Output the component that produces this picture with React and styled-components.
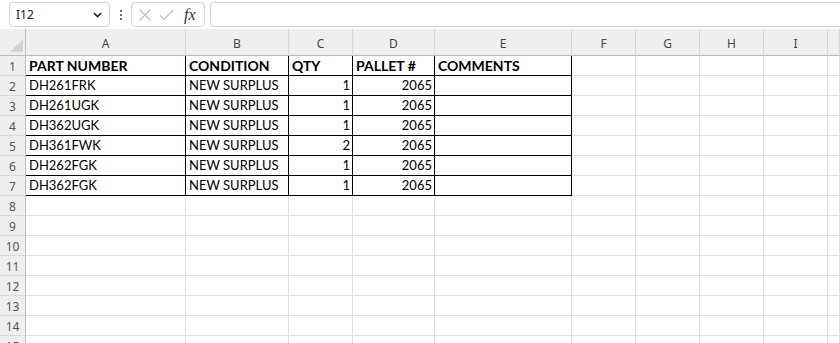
import React from "react";
import styled, { createGlobalStyle } from "styled-components";

const GlobalStyle = createGlobalStyle`
  html, body {
    margin: 0;
    padding: 0;
    background: #ffffff;
    overflow: hidden;
  }
`;

const COLS = [26, 160, 103, 64, 82, 137, 64, 64, 64, 64];
const LETTERS = ["A", "B", "C", "D", "E", "F", "G", "H", "I", ""];

const ROWS = [
  { cells: ["PART NUMBER", "CONDITION", "QTY", "PALLET #", "COMMENTS"], head: true },
  { cells: ["DH261FRK", "NEW SURPLUS", "1", "2065", ""] },
  { cells: ["DH261UGK", "NEW SURPLUS", "1", "2065", ""] },
  { cells: ["DH362UGK", "NEW SURPLUS", "1", "2065", ""] },
  { cells: ["DH361FWK", "NEW SURPLUS", "2", "2065", ""] },
  { cells: ["DH262FGK", "NEW SURPLUS", "1", "2065", ""] },
  { cells: ["DH362FGK", "NEW SURPLUS", "1", "2065", ""] },
];

const TOTAL_ROWS = 15;

const Page = styled.div`
  width: 840px;
  height: 343px;
  overflow: hidden;
  background: #ffffff;
`;

const Toolbar = styled.div`
  display: flex;
  align-items: center;
  height: 29px;
  padding: 0 0 0 9px;
  box-sizing: border-box;
  background: #ffffff;
`;

const NameBox = styled.div`
  display: flex;
  align-items: center;
  justify-content: space-between;
  width: 101px;
  height: 25px;
  box-sizing: border-box;
  border: 1px solid #d4d4d4;
  border-radius: 4px;
  padding: 0 7px 0 6px;
  font-family: "Noto Sans", "Open Sans", sans-serif;
  font-size: 12px;
  color: #222;
`;

const Kebab = styled.div`
  display: flex;
  flex-direction: column;
  justify-content: center;
  gap: 2px;
  width: 21px;
  align-items: center;

  & > span {
    width: 2px;
    height: 2px;
    background: #3a3a3a;
    border-radius: 1px;
  }
`;

const FxGroup = styled.div`
  display: flex;
  align-items: center;
  width: 74px;
  height: 25px;
  box-sizing: border-box;
  border: 1px solid #d4d4d4;
  border-radius: 4px;
  padding: 0 0 0 6px;
  gap: 7px;
`;

const Fx = styled.span`
  font-family: "Liberation Serif", "DejaVu Serif", serif;
  font-style: italic;
  font-size: 16px;
  color: #333;
  margin-left: 3px;
  line-height: 1;
`;

const FormulaInput = styled.div`
  flex: 1;
  height: 25px;
  margin-left: 5px;
  box-sizing: border-box;
  border: 1px solid #d4d4d4;
  border-right: none;
  border-radius: 4px 0 0 4px;
`;

const Grid = styled.div`
  display: grid;
  grid-template-columns: ${COLS.map((w) => w + "px").join(" ")} 1fr;
  grid-auto-rows: 20px;
  grid-template-rows: 27px;
`;

const Corner = styled.div`
  position: relative;
  background: #efefef;
  border-right: 1px solid #bdbdbd;
  border-bottom: 1px solid #bdbdbd;
  box-sizing: border-box;
  overflow: hidden;

  &::after {
    content: "";
    position: absolute;
    right: 2px;
    bottom: 3px;
    width: 0;
    height: 0;
    border-left: 13px solid transparent;
    border-bottom: 13px solid #d3d3d3;
  }
`;

const ColHead = styled.div`
  display: flex;
  align-items: center;
  justify-content: center;
  padding-top: 2px;
  background: #efefef;
  border-right: 1px solid #d9d9d9;
  border-bottom: 1px solid #bdbdbd;
  box-sizing: border-box;
  font-family: "Noto Sans", "Open Sans", sans-serif;
  font-size: 12px;
  color: #444;
`;

const RowHead = styled.div`
  display: flex;
  align-items: center;
  justify-content: center;
  background: #efefef;
  border-right: 1px solid #bdbdbd;
  border-bottom: 1px solid #d9d9d9;
  box-sizing: border-box;
  font-family: "Noto Sans", "Open Sans", sans-serif;
  font-size: 12px;
  color: #555;
  padding-top: 1px;
`;

const Cell = styled.div`
  display: flex;
  align-items: flex-end;
  justify-content: ${(p) => (p.$num ? "flex-end" : "flex-start")};
  box-sizing: border-box;
  border-right: 1px solid ${(p) => (p.$boxed ? "#000" : "#dedede")};
  border-bottom: 1px solid ${(p) => (p.$boxed ? "#000" : "#dedede")};
  padding: 0 2px 1px 3px;
  font-family: "Lato", "Liberation Sans", sans-serif;
  font-size: ${(p) => (p.$bold ? "14px" : "13px")};
  font-weight: ${(p) => (p.$bold ? 700 : 400)};
  line-height: 17px;
  color: #000;
  white-space: nowrap;
  overflow: hidden;
`;

const Chevron = () => (
  <svg width="9" height="6" viewBox="0 0 9 6">
    <path d="M1 1 L4.5 4.5 L8 1" fill="none" stroke="#222" strokeWidth="1.6" />
  </svg>
);

const CrossIcon = () => (
  <svg width="14" height="14" viewBox="0 0 14 14">
    <path d="M1.5 1.5 L12.5 12.5 M12.5 1.5 L1.5 12.5" stroke="#bdbdbd" strokeWidth="1.2" />
  </svg>
);

const CheckIcon = () => (
  <svg width="15" height="14" viewBox="0 0 15 14">
    <path d="M1 7.5 L5 11.5 L14 2" fill="none" stroke="#bdbdbd" strokeWidth="1.2" />
  </svg>
);

export default function App() {
  const rows = [];
  for (let r = 0; r < TOTAL_ROWS; r++) {
    const data = ROWS[r];
    rows.push(<RowHead key={`rh${r}`}>{r + 1}</RowHead>);
    for (let c = 0; c < 10; c++) {
      const boxed = !!data && c < 5;
      const text = boxed ? data.cells[c] : "";
      const num = boxed && !data.head && (c === 2 || c === 3);
      rows.push(
        <Cell key={`c${r}-${c}`} $boxed={boxed} $bold={boxed && data.head} $num={num}>
          {text}
        </Cell>
      );
    }
  }

  return (
    <Page>
      <GlobalStyle />
      <Toolbar>
        <NameBox>
          <span>I12</span>
          <Chevron />
        </NameBox>
        <Kebab>
          <span />
          <span />
          <span />
        </Kebab>
        <FxGroup>
          <CrossIcon />
          <CheckIcon />
          <Fx>fx</Fx>
        </FxGroup>
        <FormulaInput />
      </Toolbar>
      <Grid>
        <Corner />
        {LETTERS.map((l, i) => (
          <ColHead key={`h${i}`}>{l}</ColHead>
        ))}
        {rows}
      </Grid>
    </Page>
  );
}
